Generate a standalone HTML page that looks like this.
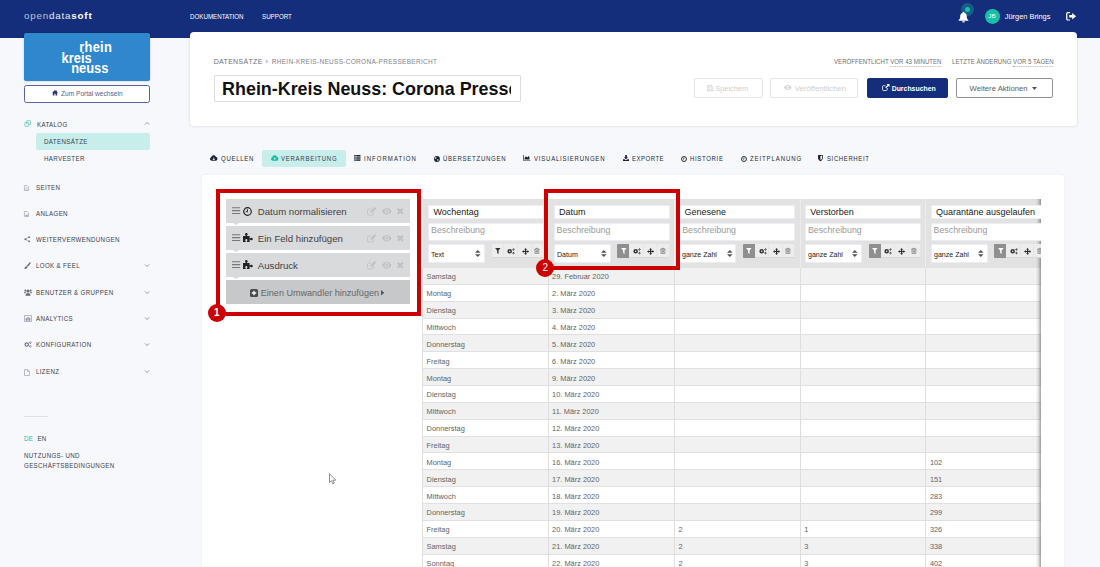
<!DOCTYPE html>
<html lang="de">
<head>
<meta charset="utf-8">
<title>Rhein-Kreis Neuss: Corona Pressebericht</title>
<style>
*{box-sizing:border-box;margin:0;padding:0}
html,body{width:1100px;height:567px;overflow:hidden;background:#f7f8fc;font-family:"Liberation Sans",sans-serif;color:#333}
body{position:relative}
.abs{position:absolute}
.t{position:absolute;white-space:nowrap;line-height:1}
svg{position:absolute;overflow:visible}
#hdr{position:absolute;left:0;top:0;width:1100px;height:38.3px;background:#142e7b}
#hdr .t{color:#fff}
.nav{font-size:6.6px;top:13.75px;transform:scaleX(.94);transform-origin:0 50%}
.sb{font-size:7px;letter-spacing:.4px;color:#3a3e4f;transform:scaleX(.88);transform-origin:0 50%}
#topcard{position:absolute;left:190px;top:32.2px;width:886.8px;height:93.7px;background:#fff;border-radius:4px;box-shadow:0 0 3px rgba(40,50,90,.18)}
#card{position:absolute;left:201.8px;top:175.2px;width:862.4px;height:400px;background:#fff;border-radius:3px;box-shadow:0 0 2px rgba(40,50,90,.10)}
.tab{font-size:7px;letter-spacing:.8px;color:#262b3a;top:154.8px;transform:scaleX(.86);transform-origin:0 50%}
.btn{position:absolute;top:78.1px;height:19.8px;border-radius:2px;font-size:7.6px;line-height:18.5px;white-space:nowrap;border:1px solid #ddd;background:#fff}
.meta{font-size:7px;color:#707070;top:58.1px;transform:scaleX(.873);transform-origin:0 50%}
.dot{border-bottom:1px dotted #aaa;padding-bottom:1px}
.prow{position:absolute;left:226px;width:184px;height:24px;background:#d9dadc}
.prow .t{font-size:9.65px;color:#414141;top:7.9px;left:31.8px}
.notch{position:absolute;left:6.8px;top:24px;width:0;height:0;border-left:3px solid transparent;border-right:3px solid transparent;border-top:2.5px solid #d9dadc}
.red{position:absolute;border:4.5px solid #cc0000}
.badge{position:absolute;width:18.2px;height:18.2px;border-radius:50%;background:#cc0000;color:#fff;font-size:10px;text-align:center;line-height:18.2px}
#thead{position:absolute;left:422.9px;top:199.2px;width:617.7px;height:68.9px;background:#e2e2e2;overflow:hidden}
#tbody{position:absolute;left:422.9px;top:268.1px;width:617.7px;height:300px;overflow:hidden}
.inp{position:absolute;background:#fff;border:1px solid #eceef3;border-radius:1px}
.inp .t{left:4px}
.row{position:absolute;left:0;width:618px;height:16.85px;border-bottom:1px solid #e0e0e0}
.row.g{background:#f1f1f1}
.row .t{font-size:7.4px;color:#646464;top:5.4px}
.vl{position:absolute;top:0;width:1px;height:300px;background:#dedede}
.ib{position:absolute;top:0;height:14.1px;background:#ededed;border-bottom:1px solid #d9d9d9;border-right:1px solid #e5e5e5}
.ib.on{background:#8f8f8f;border-color:#8f8f8f;border-radius:1px 0 0 1px}
</style>
</head>
<body>
<div id="hdr">
<div class="t" style="left:24px;top:10.8px;font-size:9.8px;letter-spacing:.8px"><span style="color:#bcc3da">open</span><span style="color:#e9ecf5">data</span><span style="font-weight:700">soft</span></div>
<div class="t nav" style="left:190px">DOKUMENTATION</div>
<div class="t nav" style="left:261.5px">SUPPORT</div>
<div class="abs" style="left:960.7px;top:2.8px;width:13.4px;height:13.4px;border-radius:50%;background:rgba(26,188,166,.34)"></div>
<div class="abs" style="left:964.6px;top:6.700px;width:5.600px;height:5.600px;border-radius:50%;background:#19c4a8"></div>
<svg style="left:958px;top:10.5px" width="11" height="12" viewBox="0 0 22 24"><path fill="#fff" d="M11 1.5c-.9 0-1.6.7-1.6 1.6v.6C6.3 4.5 4.4 7.200 4.400 10.400c0 4.200-1.300 6.400-3.200 7.900-.4.300-.2 1 .4 1h18.800c.6 0 .8-.7.4-1-1.900-1.500-3.200-3.700-3.200-7.900 0-3.200-1.900-5.900-5-6.700v-.6c0-.9-.7-1.600-1.600-1.600zM8.300 20.400c0 1.500 1.200 2.700 2.700 2.700s2.700-1.200 2.700-2.700z"/></svg>
<div class="abs" style="left:985px;top:9px;width:14.8px;height:14.8px;border-radius:50%;background:#17c0a6"></div>
<div class="t" style="left:988.3px;top:13.300px;font-size:6.200px;color:#f2fffc">JB</div>
<div class="t" style="left:1004.8px;top:12.8px;font-size:7.4px">Jürgen Brings</div>
<svg style="left:1066px;top:12.100px" width="10.400" height="8.600" viewBox="0 0 21 20" preserveAspectRatio="none"><path fill="none" stroke="#fff" stroke-width="2.6" d="M8 1.500H3.800C2.500 1.500 1.500 2.500 1.500 3.800v12.400c0 1.300 1 2.300 2.300 2.300H8"/><path fill="#fff" d="M12.500 2.500l8 7.500-8 7.500v-4.500H6.500V7h6z"/></svg>
</div>
<div id="side">
<div class="abs" style="left:24px;top:32.5px;width:126px;height:48.3px;background:#2f87cd;border-radius:2px;box-shadow:0 0 2px rgba(0,0,0,.25)"></div>
<div class="t" style="left:79.3px;top:41.8px;font-size:12.9px;font-weight:700;color:#fff;letter-spacing:0;transform:scaleY(1.13);transform-origin:0 84.65%;letter-spacing:.25px">rhein</div>
<div class="t" style="left:61.6px;top:52.6px;font-size:12.9px;font-weight:700;color:#fff;letter-spacing:0;transform:scaleY(1.13);transform-origin:0 84.65%">kreis</div>
<div class="t" style="left:71.2px;top:62.9px;font-size:12.9px;font-weight:700;color:#fff;letter-spacing:0;transform:scaleY(1.13);transform-origin:0 84.65%">neuss</div>
<div class="abs" style="left:24px;top:85px;width:126px;height:18px;background:#fff;border:1px solid #56629f;border-radius:2.500px"></div>
<svg style="left:52px;top:90.4px" width="6" height="5.500" viewBox="0 0 12 11"><path fill="#2c3680" d="M6 0L0 5.500h1.600V11h3.200V7.500h2.400V11h3.200V5.500H12L10 3.700V.8H8.500v1.500z"/></svg>
<div class="t" style="left:61px;top:91px;font-size:6.600px;color:#585e86">Zum Portal wechseln</div>
<svg style="left:24px;top:120.2px" width="7.400" height="7" viewBox="0 0 16 16"><g fill="none" stroke="#48c4ab" stroke-width="1.500"><rect x="5.500" y="1.500" width="9" height="9" rx="1.500"/><rect x="1.500" y="5.500" width="9" height="9" rx="1.500" fill="#f7f8fc"/><path d="M4 8.500h4"/></g></svg>
<div class="t sb" style="left:36.6px;top:120.6px">KATALOG</div>
<svg style="left:144.5px;top:122.3px" width="4.200" height="3" viewBox="0 0 5 3.500"><path d="M0 3L2.500 .5 5 3" fill="none" stroke="#7f8496" stroke-width="1"/></svg>
<div class="abs" style="left:36.400px;top:132.600px;width:113.200px;height:17.100px;background:#c7eeea;border-radius:2.500px"></div>
<div class="t sb" style="left:44.400px;top:137.600px">DATENSÄTZE</div>
<div class="t sb" style="left:44.400px;top:154.800px">HARVESTER</div>
<svg style="left:24px;top:184.8px" width="5" height="6" viewBox="0 0 12 14"><path fill="none" stroke="#a3a7b5" stroke-width="1.800" d="M1 1h6.500L11 4.500V13H1z"/><path stroke="#a3a7b5" stroke-width="1.400" d="M3.200 7h5.600M3.200 9.800h5.600"/></svg>
<div class="t sb" style="left:36.200px;top:184.0px">SEITEN</div>
<svg style="left:24px;top:210.8px" width="5" height="6" viewBox="0 0 12 14"><path fill="none" stroke="#a3a7b5" stroke-width="1.800" d="M1 1h6.500L11 4.500V13H1z"/><path fill="#a3a7b5" d="M2.500 11.500l2.300-4 1.700 2L8 8l1.800 3.500z"/></svg>
<div class="t sb" style="left:36.200px;top:210.0px">ANLAGEN</div>
<svg style="left:24px;top:235.9px" width="6.500" height="6.500" viewBox="0 0 13 13"><g fill="#6b6f7e"><circle cx="10.300" cy="2.300" r="1.900"/><circle cx="2.700" cy="6.500" r="1.900"/><circle cx="10.300" cy="10.700" r="1.900"/></g><path fill="none" stroke="#6b6f7e" stroke-width="1" d="M10.300 2.300L2.700 6.500l7.600 4.200"/></svg>
<div class="t sb" style="left:36.200px;top:236.0px">WEITERVERWENDUNGEN</div>
<svg style="left:24px;top:261.9px" width="7" height="7" viewBox="0 0 14 14"><path fill="#5d6070" d="M13 .6c.6.5.5 1.300.1 1.900L7.800 9.300 5.600 7.500 11.300.9c.5-.6 1.200-.7 1.700-.3zM4.700 8.300l2.100 1.800c.2 1.600-1 3.300-3.600 3.300-1.300 0-2.400-.5-3-1.100 1.500-.3 1.700-1.300 2-2.200.3-1 1.100-1.800 2.500-1.800z"/></svg>
<div class="t sb" style="left:36.200px;top:262.0px">LOOK &amp; FEEL</div>
<svg style="left:144.5px;top:264.2px" width="4.200" height="3" viewBox="0 0 5 3.500"><path d="M0 .5L2.500 3 5 .5" fill="none" stroke="#7f8496" stroke-width="1"/></svg>
<svg style="left:24px;top:288.7px" width="8" height="7" viewBox="0 0 16 14"><g fill="#666a78"><circle cx="8" cy="3.800" r="3"/><path d="M3 13.500c0-3.500 2-5.500 5-5.500s5 2 5 5.500z"/><circle cx="2.800" cy="3" r="2"/><circle cx="13.200" cy="3" r="2"/><path d="M0 8.500c0-2 1.200-3 2.800-3 .8 0 1.400.2 1.900.7C3.600 7 3 7.800 2.700 8.500zM16 8.500c0-2-1.200-3-2.800-3-.8 0-1.400.2-1.900.7 1.100.8 1.700 1.600 2 2.300z"/></g></svg>
<div class="t sb" style="left:36.200px;top:288.8px">BENUTZER &amp; GRUPPEN</div>
<svg style="left:144.5px;top:291.0px" width="4.200" height="3" viewBox="0 0 5 3.500"><path d="M0 .5L2.500 3 5 .5" fill="none" stroke="#7f8496" stroke-width="1"/></svg>
<svg style="left:24px;top:314.9px" width="8" height="7" viewBox="0 0 16 14"><path fill="none" stroke="#a3a7b5" stroke-width="1.600" d="M1 1v12h14V1z"/><path fill="#7d8190" d="M3.500 6.500h2.200v5h-2.200zM6.900 4h2.200v7.500H6.900zM10.300 5.500h2.200v6h-2.200z"/></svg>
<div class="t sb" style="left:36.200px;top:315.0px">ANALYTICS</div>
<svg style="left:144.5px;top:317.2px" width="4.200" height="3" viewBox="0 0 5 3.500"><path d="M0 .5L2.500 3 5 .5" fill="none" stroke="#7f8496" stroke-width="1"/></svg>
<svg style="left:24px;top:341.1px" width="8" height="7" viewBox="0 0 16 14"><g fill="none" stroke="#747887"><circle cx="5.500" cy="7" r="3.400" stroke-width="2.400"/><circle cx="12.700" cy="3.300" r="1.700" stroke-width="1.500"/><circle cx="12.700" cy="10.700" r="1.700" stroke-width="1.500"/></g></svg>
<div class="t sb" style="left:36.200px;top:341.2px">KONFIGURATION</div>
<svg style="left:144.5px;top:343.40000000000003px" width="4.200" height="3" viewBox="0 0 5 3.500"><path d="M0 .5L2.500 3 5 .5" fill="none" stroke="#7f8496" stroke-width="1"/></svg>
<svg style="left:24px;top:368.79999999999995px" width="6" height="7" viewBox="0 0 12 14"><path fill="none" stroke="#a3a7b5" stroke-width="1.500" d="M1 1h6.500L11 4.500V13H1zM7 1v4h4"/></svg>
<div class="t sb" style="left:36.200px;top:368.0px">LIZENZ</div>
<svg style="left:144.5px;top:370.2px" width="4.200" height="3" viewBox="0 0 5 3.500"><path d="M0 .5L2.500 3 5 .5" fill="none" stroke="#7f8496" stroke-width="1"/></svg>
<div class="abs" style="left:24px;top:415.500px;width:24px;height:1px;background:#dfe1ea"></div>
<div class="t sb" style="left:24px;top:434.800px"><span style="color:#22b79b">DE</span>&nbsp; EN</div>
<div class="t sb" style="left:24px;top:452.300px">NUTZUNGS- UND</div>
<div class="t sb" style="left:24px;top:462.300px">GESCHÄFTSBEDINGUNGEN</div>
</div>
<div id="topcard"></div>
<div class="t" style="left:213.700px;top:58.200px;font-size:7px;letter-spacing:.32px;color:#6b6f7d">DATENSÄTZE<span style="letter-spacing:0;font-size:8px;line-height:0;color:#777b88;margin:0 1.600px 0 .4px">&nbsp;›&nbsp;</span><span style="font-size:6.500px;letter-spacing:.3px;color:#80848f">RHEIN-KREIS-NEUSS-CORONA-PRESSEBERICHT</span></div>
<div class="abs" style="left:213.700px;top:75px;width:307.300px;height:26.800px;background:#fff;border:1px solid #dcdcdc;border-radius:1px;overflow:hidden"><div class="abs" style="left:7.400px;top:0;width:289.100px;height:25px;overflow:hidden"><div class="t" style="left:0;top:5.300px;font-size:17.900px;font-weight:700;color:#111;letter-spacing:0">Rhein-Kreis Neuss: Corona Pressebericht</div></div></div>
<div class="t meta" style="left:833.500px">VERÖFFENTLICHT <span class="dot">VOR 43 MINUTEN</span></div>
<div class="t meta" style="left:951.600px">LETZTE ÄNDERUNG <span class="dot">VOR 5 TAGEN</span></div>
<div class="btn" style="left:694.100px;width:68.500px;color:#cfcfcf;border-color:#e4e4e4"><svg style="left:11.500px;top:5.600px" width="6.500" height="6.500" viewBox="0 0 13 13"><path fill="none" stroke="#cfcfcf" stroke-width="1.400" d="M1 1h8.500L12 3.500V12H1zM3.500 1v3.500h5V1M3.500 12V8h6v4"/></svg><span class="t" style="left:20.300px;top:5.600px;font-size:7.350px">Speichern</span></div>
<div class="btn" style="left:770.200px;width:88.300px;color:#cfcfcf;border-color:#e4e4e4"><svg style="left:13px;top:6.300px" width="7.500" height="5" viewBox="0 0 15 10"><path fill="#cfcfcf" d="M7.500 0C4 0 1.300 2.200 0 5c1.300 2.800 4 5 7.500 5S13.700 7.800 15 5C13.700 2.200 11 0 7.500 0zm0 8.300A3.300 3.300 0 1 1 7.500 1.700a3.300 3.300 0 0 1 0 6.600z"/><circle cx="7.500" cy="5" r="1.700" fill="#cfcfcf"/></svg><span class="t" style="left:23.600px;top:5.500px;font-size:7.750px">Veröffentlichen</span></div>
<div class="btn" style="left:867px;width:81.400px;background:#142e7b;border-color:#142e7b;color:#fff"><svg style="left:13.500px;top:5.400px" width="7.500" height="7" viewBox="0 0 15 14"><path fill="none" stroke="#fff" stroke-width="1.600" d="M10.500 8v3.500c0 .8-.7 1.500-1.500 1.500H2.500C1.700 13 1 12.300 1 11.500V5c0-.8.7-1.500 1.500-1.500H7"/><path fill="#fff" d="M9 0h6v6l-2.200-2.200-4.600 4.600-1.600-1.600 4.600-4.600z"/></svg><span class="t" style="left:23.700px;top:6.500px;font-weight:700;font-size:6.900px">Durchsuchen</span></div>
<div class="btn" style="left:956.400px;width:96.400px;color:#5c5c5c;border-color:#919191"><span class="t" style="left:12.200px;top:5.500px;font-size:7.700px">Weitere Aktionen</span><svg style="left:75px;top:8.400px" width="5" height="3" viewBox="0 0 10 6"><path fill="#555" d="M0 0h10L5 6z"/></svg></div>
<div class="abs" style="left:262.100px;top:149.700px;width:83.900px;height:17.100px;background:#c7eeea;border-radius:2.500px"></div>
<svg style="left:209.5px;top:155.3px" width="7.500" height="6" viewBox="0 0 16 13"><path fill="#1d2233" d="M4 12.500C1.800 12.500 0 10.800 0 8.700 0 7 1.100 5.600 2.700 5.100 2.900 2.500 5.100.5 7.800.5c2.200 0 4.100 1.400 4.800 3.400C14.600 4.200 16 5.900 16 8c0 2.500-2 4.500-4.400 4.500z"/><path fill="none" stroke="#f7f8fc" stroke-width="1.700" d="M8 5.500v5M5.800 8.500L8 11l2.200-2.500"/></svg>
<div class="t tab" style="left:220.7px;letter-spacing:0.83px">QUELLEN</div>
<svg style="left:270.5px;top:155.3px" width="7.500" height="6" viewBox="0 0 16 13"><path fill="#1cb8a0" d="M4 12.500C1.800 12.500 0 10.800 0 8.700 0 7 1.100 5.600 2.700 5.100 2.900 2.500 5.100.5 7.800.5c2.200 0 4.100 1.400 4.800 3.400C14.600 4.200 16 5.900 16 8c0 2.500-2 4.500-4.400 4.500z"/><path fill="none" stroke="#c7eeea" stroke-width="1.700" d="M8 11V6M5.800 8.300L8 5.800l2.200 2.500"/></svg>
<div class="t tab" style="left:281.2px;letter-spacing:0.86px;color:#33404d">VERARBEITUNG</div>
<svg style="left:354.3px;top:155.3px" width="6.600" height="5.800" viewBox="0 0 14 13"><path fill="#1d2233" d="M0 0h14v13H0z"/><path stroke="#f7f8fc" stroke-width="1.100" d="M0 3.500h14M0 6.500h14M0 9.500h14M4 0v13"/></svg>
<div class="t tab" style="left:364.2px;letter-spacing:1.19px">INFORMATION</div>
<svg style="left:434.2px;top:155.60000000000002px" width="5.900" height="5.900" viewBox="0 0 14 14"><circle cx="7" cy="7" r="7" fill="#1d2233"/><path fill="#f7f8fc" d="M3 3.500c1-.5 2.500-.3 3 .5s-.5 1.500-1.500 2S3 7.500 2 6.500 2.300 4 3 3.500zM8 8c1-.5 3 0 3 1s-1 2.500-2 2.500S7.500 10 7.500 9.300 7.500 8.300 8 8z"/></svg>
<div class="t tab" style="left:443.2px;letter-spacing:0.84px">ÜBERSETZUNGEN</div>
<svg style="left:523px;top:155.3px" width="7.600" height="5.800" viewBox="0 0 16 13"><path fill="#1d2233" d="M0 0h1.500v11.500H16V13H0zM3 10V6.500l3-3.500 3 2.500 3.500-3.500L14 5v5z"/></svg>
<div class="t tab" style="left:534.4px;letter-spacing:0.9px">VISUALISIERUNGEN</div>
<svg style="left:622.5px;top:155.4px" width="6" height="6" viewBox="0 0 14 14"><path fill="#1d2233" d="M5 0h4v5h3L7 10 2 5h3zM0 10h3.500L7 12.500 10.500 10H14v4H0z"/></svg>
<div class="t tab" style="left:632.3px;letter-spacing:0.57px">EXPORTE</div>
<svg style="left:681px;top:155.5px" width="6" height="6" viewBox="0 0 14 14"><circle cx="7" cy="7" r="5.800" fill="none" stroke="#1d2233" stroke-width="2.200"/><path fill="none" stroke="#1d2233" stroke-width="1.600" d="M7 3.500V7.300H4.500"/></svg>
<div class="t tab" style="left:690.2px;letter-spacing:0.77px">HISTORIE</div>
<svg style="left:740.5px;top:155.5px" width="6" height="6" viewBox="0 0 14 14"><circle cx="7" cy="7" r="5.800" fill="none" stroke="#1d2233" stroke-width="2.200"/><path fill="none" stroke="#1d2233" stroke-width="1.600" d="M7 3.500V7.300H4.500"/></svg>
<div class="t tab" style="left:749.8px;letter-spacing:1.04px">ZEITPLANUNG</div>
<svg style="left:818.4px;top:155.3px" width="4.900" height="6.200" viewBox="0 0 11 14"><path fill="#1d2233" d="M0 0h11v7c0 3.500-3 6-5.500 7C3 13 0 10.500 0 7z"/><path fill="#f7f8fc" d="M5.500 1.800H9.300V7c0 2.200-1.800 4-3.800 4.900z"/></svg>
<div class="t tab" style="left:827px;letter-spacing:0.7px">SICHERHEIT</div>
<div id="card"></div>
<div class="prow" style="top:199px">
<svg style="left:6px;top:8px" width="8.200" height="7.200" viewBox="0 0 8.200 7.200"><path stroke="#777" stroke-width="1.100" d="M0 .7h8.200M0 3.600h8.200M0 6.500h8.200"/></svg>
<svg style="left:17.200px;top:7.800px" width="9" height="9" viewBox="0 0 18 18"><circle cx="9" cy="9" r="7.600" fill="none" stroke="#222" stroke-width="2.400"/><path fill="none" stroke="#222" stroke-width="2" d="M9 4.500V9.500H5.500"/></svg>
<div class="t">Datum normalisieren</div>
<svg style="left:141px;top:7.500px" width="9.500" height="8.500" viewBox="0 0 19 17"><path fill="none" stroke="#c0c1c3" stroke-width="1.600" d="M13 10v4c0 1.100-.9 2-2 2H3c-1.100 0-2-.9-2-2V6c0-1.100.9-2 2-2h6"/><path fill="#c0c1c3" d="M15.500 0l3 3-8 8-3.700.7.700-3.700z"/></svg>
<svg style="left:156px;top:8.800px" width="9.500" height="6.500" viewBox="0 0 15 10"><path fill="#c0c1c3" d="M7.500 0C4 0 1.300 2.200 0 5c1.300 2.800 4 5 7.500 5S13.700 7.800 15 5C13.700 2.200 11 0 7.500 0zm0 8.500A3.500 3.500 0 1 1 7.500 1.500a3.500 3.500 0 0 1 0 7z"/><circle cx="7.500" cy="5" r="1.800" fill="#c0c1c3"/></svg>
<svg style="left:171px;top:8.800px" width="6.400" height="6.400" viewBox="0 0 10 10"><path stroke="#c0c1c3" stroke-width="3.300" d="M1 1l8 8M9 1l-8 8"/></svg>
<div class="notch"></div></div>
<div class="prow" style="top:226.2px">
<svg style="left:6px;top:8px" width="8.200" height="7.200" viewBox="0 0 8.200 7.200"><path stroke="#777" stroke-width="1.100" d="M0 .7h8.200M0 3.600h8.200M0 6.500h8.200"/></svg>
<svg style="left:17px;top:6.900px" width="9.800" height="9" viewBox="0 0 19.600 18"><g fill="#222"><rect x="0" y="6" width="13.200" height="12"/><circle cx="6.600" cy="2.500" r="2.500"/><rect x="5.300" y="3" width="2.600" height="4"/><circle cx="17" cy="12" r="2.500"/><rect x="12.500" y="10.700" width="4" height="2.600"/></g><g fill="#d9dadc"><circle cx="6.600" cy="14.300" r="2.200"/><rect x="5.500" y="15" width="2.200" height="3.200"/></g></svg>
<div class="t">Ein Feld hinzufügen</div>
<svg style="left:141px;top:7.500px" width="9.500" height="8.500" viewBox="0 0 19 17"><path fill="none" stroke="#c0c1c3" stroke-width="1.600" d="M13 10v4c0 1.100-.9 2-2 2H3c-1.100 0-2-.9-2-2V6c0-1.100.9-2 2-2h6"/><path fill="#c0c1c3" d="M15.500 0l3 3-8 8-3.700.7.700-3.700z"/></svg>
<svg style="left:156px;top:8.800px" width="9.500" height="6.500" viewBox="0 0 15 10"><path fill="#c0c1c3" d="M7.500 0C4 0 1.300 2.200 0 5c1.300 2.800 4 5 7.500 5S13.700 7.800 15 5C13.700 2.200 11 0 7.500 0zm0 8.500A3.500 3.500 0 1 1 7.500 1.500a3.500 3.500 0 0 1 0 7z"/><circle cx="7.500" cy="5" r="1.800" fill="#c0c1c3"/></svg>
<svg style="left:171px;top:8.800px" width="6.400" height="6.400" viewBox="0 0 10 10"><path stroke="#c0c1c3" stroke-width="3.300" d="M1 1l8 8M9 1l-8 8"/></svg>
<div class="notch"></div></div>
<div class="prow" style="top:253px">
<svg style="left:6px;top:8px" width="8.200" height="7.200" viewBox="0 0 8.200 7.200"><path stroke="#777" stroke-width="1.100" d="M0 .7h8.200M0 3.600h8.200M0 6.500h8.200"/></svg>
<svg style="left:17px;top:6.900px" width="9.800" height="9" viewBox="0 0 19.600 18"><g fill="#222"><rect x="0" y="6" width="13.200" height="12"/><circle cx="6.600" cy="2.500" r="2.500"/><rect x="5.300" y="3" width="2.600" height="4"/><circle cx="17" cy="12" r="2.500"/><rect x="12.500" y="10.700" width="4" height="2.600"/></g><g fill="#d9dadc"><circle cx="6.600" cy="14.300" r="2.200"/><rect x="5.500" y="15" width="2.200" height="3.200"/></g></svg>
<div class="t">Ausdruck</div>
<svg style="left:141px;top:7.500px" width="9.500" height="8.500" viewBox="0 0 19 17"><path fill="none" stroke="#c0c1c3" stroke-width="1.600" d="M13 10v4c0 1.100-.9 2-2 2H3c-1.100 0-2-.9-2-2V6c0-1.100.9-2 2-2h6"/><path fill="#c0c1c3" d="M15.500 0l3 3-8 8-3.700.7.700-3.700z"/></svg>
<svg style="left:156px;top:8.800px" width="9.500" height="6.500" viewBox="0 0 15 10"><path fill="#c0c1c3" d="M7.500 0C4 0 1.300 2.200 0 5c1.300 2.800 4 5 7.500 5S13.700 7.800 15 5C13.700 2.200 11 0 7.500 0zm0 8.500A3.500 3.500 0 1 1 7.500 1.500a3.500 3.500 0 0 1 0 7z"/><circle cx="7.500" cy="5" r="1.800" fill="#c0c1c3"/></svg>
<svg style="left:171px;top:8.800px" width="6.400" height="6.400" viewBox="0 0 10 10"><path stroke="#c0c1c3" stroke-width="3.300" d="M1 1l8 8M9 1l-8 8"/></svg>
<div class="notch"></div></div>
<div class="abs" style="left:226px;top:280px;width:184px;height:23.700px;background:#c7c8ca"></div>
<svg style="left:250px;top:288.500px" width="8" height="8" viewBox="0 0 16 16"><rect width="16" height="16" rx="3" fill="#4a4a4a"/><path stroke="#fff" stroke-width="2.600" d="M8 3.500v9M3.500 8h9"/></svg>
<div class="t" style="left:260.800px;top:288.500px;font-size:9.060px;color:#666">Einen Umwandler hinzufügen</div>
<svg style="left:381px;top:289.600px" width="3.300" height="5.600" viewBox="0 0 3 5"><path fill="#555" d="M0 0l3 2.500L0 5z"/></svg>
<div id="thead">
<div class="abs" style="right:0;top:0;width:5px;height:400px;background:linear-gradient(90deg,rgba(0,0,0,0),rgba(0,0,0,.10) 45%,rgba(0,0,0,.36))"></div>
<div class="inp" style="left:5.40px;top:5.600px;width:115.800px;height:13.900px"><div class="t" style="left:4.200px;top:2.100px;font-size:9px;color:#222">Wochentag</div></div>
<div class="inp" style="left:5.40px;top:23.900px;width:115.800px;height:17.700px"><div class="t" style="left:1.800px;top:2.400px;font-size:8.800px;color:#9a9a9a">Beschreibung</div></div>
<div class="inp" style="left:5.40px;top:45.200px;width:56.900px;height:18.200px"><div class="t" style="left:1.800px;top:5.200px;font-size:7.500px;color:#222;transform:scaleX(.94);transform-origin:0 50%">Text</div><svg style="left:46.200px;top:4.800px" width="5.600" height="7" viewBox="0 0 8 10"><path fill="#555" d="M4 0l4 4H0zM4 10L0 6h8z"/></svg></div>
<div class="abs" style="left:69.10px;top:44.900px;width:52.100px;height:14.100px">
<div class="ib" style="left:0.00px;width:11.90px"></div>
<div class="ib" style="left:11.90px;width:14.50px"></div>
<div class="ib" style="left:26.40px;width:13.60px"></div>
<div class="ib" style="left:40.00px;width:12.10px"></div>
<svg style="left:3.100px;top:4.100px" width="5.700" height="6" viewBox="0 0 10 11"><path fill="#333" d="M0 0h10L6.300 4.800V11L3.700 9V4.800z"/></svg>
<svg style="left:15.500px;top:3.700px" width="8.200" height="6.600" viewBox="0 0 17 14"><g fill="none" stroke="#333"><circle cx="5.500" cy="7" r="3.300" stroke-width="3.200"/><circle cx="13.600" cy="3.200" r="1.500" stroke-width="1.900"/><circle cx="13.600" cy="10.800" r="1.500" stroke-width="1.900"/></g></svg>
<svg style="left:29.700px;top:3.500px" width="7.200" height="7" viewBox="0 0 14 14"><path fill="#2b2b2b" d="M7 0l2.800 3.300H8.200v2.500h2.500V4.200L14 7l-3.300 2.800V8.200H8.200v2.500h1.600L7 14l-2.800-3.300h1.600V8.200H3.300v1.600L0 7l3.300-2.800v1.600h2.500V3.300H4.200z"/></svg>
<svg style="left:42.300px;top:4.200px" width="5.800" height="5.800" viewBox="0 0 11 12"><path fill="none" stroke="#6e6e6e" stroke-width="1.300" d="M0 2.500h11M3.500 2.500V.7h4v1.800M1.500 2.500v8.800h8V2.500M4 4.800v4.500M5.500 4.800v4.500M7 4.800v4.500"/></svg>
</div>
<div class="abs" style="left:125.50px;top:0;width:1px;height:70px;background:#ececec"></div>
<div class="inp" style="left:130.90px;top:5.600px;width:115.800px;height:13.900px"><div class="t" style="left:4.200px;top:2.100px;font-size:9px;color:#222">Datum</div></div>
<div class="inp" style="left:130.90px;top:23.900px;width:115.800px;height:17.700px"><div class="t" style="left:1.800px;top:2.400px;font-size:8.800px;color:#9a9a9a">Beschreibung</div></div>
<div class="inp" style="left:130.90px;top:45.200px;width:56.900px;height:18.200px"><div class="t" style="left:1.800px;top:5.200px;font-size:7.500px;color:#222;transform:scaleX(.94);transform-origin:0 50%">Datum</div><svg style="left:46.200px;top:4.800px" width="5.600" height="7" viewBox="0 0 8 10"><path fill="#555" d="M4 0l4 4H0zM4 10L0 6h8z"/></svg></div>
<div class="abs" style="left:194.60px;top:44.900px;width:52.100px;height:14.100px">
<div class="ib on" style="left:0.00px;width:11.90px"></div>
<div class="ib" style="left:11.90px;width:14.50px"></div>
<div class="ib" style="left:26.40px;width:13.60px"></div>
<div class="ib" style="left:40.00px;width:12.10px"></div>
<svg style="left:3.100px;top:4.100px" width="5.700" height="6" viewBox="0 0 10 11"><path fill="#fff" d="M0 0h10L6.300 4.800V11L3.700 9V4.800z"/></svg>
<svg style="left:15.500px;top:3.700px" width="8.200" height="6.600" viewBox="0 0 17 14"><g fill="none" stroke="#333"><circle cx="5.500" cy="7" r="3.300" stroke-width="3.200"/><circle cx="13.600" cy="3.200" r="1.500" stroke-width="1.900"/><circle cx="13.600" cy="10.800" r="1.500" stroke-width="1.900"/></g></svg>
<svg style="left:29.700px;top:3.500px" width="7.200" height="7" viewBox="0 0 14 14"><path fill="#2b2b2b" d="M7 0l2.800 3.300H8.200v2.500h2.500V4.200L14 7l-3.300 2.800V8.200H8.200v2.500h1.600L7 14l-2.800-3.300h1.600V8.200H3.300v1.600L0 7l3.300-2.800v1.600h2.500V3.300H4.200z"/></svg>
<svg style="left:42.300px;top:4.200px" width="5.800" height="5.800" viewBox="0 0 11 12"><path fill="none" stroke="#6e6e6e" stroke-width="1.300" d="M0 2.500h11M3.500 2.500V.7h4v1.800M1.500 2.500v8.800h8V2.500M4 4.800v4.500M5.500 4.800v4.500M7 4.800v4.500"/></svg>
</div>
<div class="abs" style="left:251.10px;top:0;width:1px;height:70px;background:#ececec"></div>
<div class="inp" style="left:256.50px;top:5.600px;width:115.800px;height:13.900px"><div class="t" style="left:4.200px;top:2.100px;font-size:9px;color:#222">Genesene</div></div>
<div class="inp" style="left:256.50px;top:23.900px;width:115.800px;height:17.700px"><div class="t" style="left:1.800px;top:2.400px;font-size:8.800px;color:#9a9a9a">Beschreibung</div></div>
<div class="inp" style="left:256.50px;top:45.200px;width:56.900px;height:18.200px"><div class="t" style="left:1.800px;top:5.200px;font-size:7.500px;color:#222;transform:scaleX(.94);transform-origin:0 50%">ganze Zahl</div><svg style="left:46.200px;top:4.800px" width="5.600" height="7" viewBox="0 0 8 10"><path fill="#555" d="M4 0l4 4H0zM4 10L0 6h8z"/></svg></div>
<div class="abs" style="left:320.20px;top:44.900px;width:52.100px;height:14.100px">
<div class="ib on" style="left:0.00px;width:11.90px"></div>
<div class="ib" style="left:11.90px;width:14.50px"></div>
<div class="ib" style="left:26.40px;width:13.60px"></div>
<div class="ib" style="left:40.00px;width:12.10px"></div>
<svg style="left:3.100px;top:4.100px" width="5.700" height="6" viewBox="0 0 10 11"><path fill="#fff" d="M0 0h10L6.300 4.800V11L3.700 9V4.800z"/></svg>
<svg style="left:15.500px;top:3.700px" width="8.200" height="6.600" viewBox="0 0 17 14"><g fill="none" stroke="#333"><circle cx="5.500" cy="7" r="3.300" stroke-width="3.200"/><circle cx="13.600" cy="3.200" r="1.500" stroke-width="1.900"/><circle cx="13.600" cy="10.800" r="1.500" stroke-width="1.900"/></g></svg>
<svg style="left:29.700px;top:3.500px" width="7.200" height="7" viewBox="0 0 14 14"><path fill="#2b2b2b" d="M7 0l2.800 3.300H8.200v2.500h2.500V4.200L14 7l-3.300 2.800V8.200H8.200v2.500h1.600L7 14l-2.800-3.300h1.600V8.200H3.300v1.600L0 7l3.300-2.800v1.600h2.500V3.300H4.200z"/></svg>
<svg style="left:42.300px;top:4.200px" width="5.800" height="5.800" viewBox="0 0 11 12"><path fill="none" stroke="#6e6e6e" stroke-width="1.300" d="M0 2.500h11M3.500 2.500V.7h4v1.800M1.500 2.500v8.800h8V2.500M4 4.800v4.500M5.500 4.800v4.500M7 4.800v4.500"/></svg>
</div>
<div class="abs" style="left:376.80px;top:0;width:1px;height:70px;background:#ececec"></div>
<div class="inp" style="left:382.20px;top:5.600px;width:115.800px;height:13.900px"><div class="t" style="left:4.200px;top:2.100px;font-size:9px;color:#222">Verstorben</div></div>
<div class="inp" style="left:382.20px;top:23.900px;width:115.800px;height:17.700px"><div class="t" style="left:1.800px;top:2.400px;font-size:8.800px;color:#9a9a9a">Beschreibung</div></div>
<div class="inp" style="left:382.20px;top:45.200px;width:56.900px;height:18.200px"><div class="t" style="left:1.800px;top:5.200px;font-size:7.500px;color:#222;transform:scaleX(.94);transform-origin:0 50%">ganze Zahl</div><svg style="left:46.200px;top:4.800px" width="5.600" height="7" viewBox="0 0 8 10"><path fill="#555" d="M4 0l4 4H0zM4 10L0 6h8z"/></svg></div>
<div class="abs" style="left:445.90px;top:44.900px;width:52.100px;height:14.100px">
<div class="ib on" style="left:0.00px;width:11.90px"></div>
<div class="ib" style="left:11.90px;width:14.50px"></div>
<div class="ib" style="left:26.40px;width:13.60px"></div>
<div class="ib" style="left:40.00px;width:12.10px"></div>
<svg style="left:3.100px;top:4.100px" width="5.700" height="6" viewBox="0 0 10 11"><path fill="#fff" d="M0 0h10L6.300 4.800V11L3.700 9V4.800z"/></svg>
<svg style="left:15.500px;top:3.700px" width="8.200" height="6.600" viewBox="0 0 17 14"><g fill="none" stroke="#333"><circle cx="5.500" cy="7" r="3.300" stroke-width="3.200"/><circle cx="13.600" cy="3.200" r="1.500" stroke-width="1.900"/><circle cx="13.600" cy="10.800" r="1.500" stroke-width="1.900"/></g></svg>
<svg style="left:29.700px;top:3.500px" width="7.200" height="7" viewBox="0 0 14 14"><path fill="#2b2b2b" d="M7 0l2.800 3.300H8.200v2.500h2.500V4.200L14 7l-3.300 2.800V8.200H8.200v2.500h1.600L7 14l-2.800-3.300h1.600V8.200H3.300v1.600L0 7l3.300-2.800v1.600h2.500V3.300H4.200z"/></svg>
<svg style="left:42.300px;top:4.200px" width="5.800" height="5.800" viewBox="0 0 11 12"><path fill="none" stroke="#6e6e6e" stroke-width="1.300" d="M0 2.500h11M3.500 2.500V.7h4v1.800M1.500 2.500v8.800h8V2.500M4 4.800v4.500M5.500 4.800v4.500M7 4.800v4.500"/></svg>
</div>
<div class="abs" style="left:502.50px;top:0;width:1px;height:70px;background:#ececec"></div>
<div class="inp" style="left:507.90px;top:5.600px;width:115.800px;height:13.900px"><div class="t" style="left:4.200px;top:2.100px;font-size:9px;color:#222">Quarantäne ausgelaufen</div></div>
<div class="inp" style="left:507.90px;top:23.900px;width:115.800px;height:17.700px"><div class="t" style="left:1.800px;top:2.400px;font-size:8.800px;color:#9a9a9a">Beschreibung</div></div>
<div class="inp" style="left:507.90px;top:45.200px;width:56.900px;height:18.200px"><div class="t" style="left:1.800px;top:5.200px;font-size:7.500px;color:#222;transform:scaleX(.94);transform-origin:0 50%">ganze Zahl</div><svg style="left:46.200px;top:4.800px" width="5.600" height="7" viewBox="0 0 8 10"><path fill="#555" d="M4 0l4 4H0zM4 10L0 6h8z"/></svg></div>
<div class="abs" style="left:571.60px;top:44.900px;width:52.100px;height:14.100px">
<div class="ib on" style="left:0.00px;width:11.90px"></div>
<div class="ib" style="left:11.90px;width:14.50px"></div>
<div class="ib" style="left:26.40px;width:13.60px"></div>
<div class="ib" style="left:40.00px;width:12.10px"></div>
<svg style="left:3.100px;top:4.100px" width="5.700" height="6" viewBox="0 0 10 11"><path fill="#fff" d="M0 0h10L6.300 4.800V11L3.700 9V4.800z"/></svg>
<svg style="left:15.500px;top:3.700px" width="8.200" height="6.600" viewBox="0 0 17 14"><g fill="none" stroke="#333"><circle cx="5.500" cy="7" r="3.300" stroke-width="3.200"/><circle cx="13.600" cy="3.200" r="1.500" stroke-width="1.900"/><circle cx="13.600" cy="10.800" r="1.500" stroke-width="1.900"/></g></svg>
<svg style="left:29.700px;top:3.500px" width="7.200" height="7" viewBox="0 0 14 14"><path fill="#2b2b2b" d="M7 0l2.800 3.300H8.200v2.500h2.500V4.200L14 7l-3.300 2.800V8.200H8.200v2.500h1.600L7 14l-2.800-3.300h1.600V8.200H3.300v1.600L0 7l3.300-2.800v1.600h2.500V3.300H4.200z"/></svg>
<svg style="left:42.300px;top:4.200px" width="5.800" height="5.800" viewBox="0 0 11 12"><path fill="none" stroke="#6e6e6e" stroke-width="1.300" d="M0 2.500h11M3.500 2.500V.7h4v1.800M1.500 2.500v8.800h8V2.500M4 4.800v4.500M5.500 4.800v4.500M7 4.800v4.500"/></svg>
</div>
</div>
<div class="abs" style="left:422.400px;top:268px;width:1px;height:300px;background:#e0e0e0"></div>
<div id="tbody">
<div class="row g" style="top:0.00px">
<div class="t" style="left:3.70px">Samstag</div>
<div class="t" style="left:129.20px">29. Februar 2020</div>
</div>
<div class="row" style="top:16.85px">
<div class="t" style="left:3.70px">Montag</div>
<div class="t" style="left:129.20px">2. März 2020</div>
</div>
<div class="row g" style="top:33.70px">
<div class="t" style="left:3.70px">Dienstag</div>
<div class="t" style="left:129.20px">3. März 2020</div>
</div>
<div class="row" style="top:50.55px">
<div class="t" style="left:3.70px">Mittwoch</div>
<div class="t" style="left:129.20px">4. März 2020</div>
</div>
<div class="row g" style="top:67.40px">
<div class="t" style="left:3.70px">Donnerstag</div>
<div class="t" style="left:129.20px">5. März 2020</div>
</div>
<div class="row" style="top:84.25px">
<div class="t" style="left:3.70px">Freitag</div>
<div class="t" style="left:129.20px">6. März 2020</div>
</div>
<div class="row g" style="top:101.10px">
<div class="t" style="left:3.70px">Montag</div>
<div class="t" style="left:129.20px">9. März 2020</div>
</div>
<div class="row" style="top:117.95px">
<div class="t" style="left:3.70px">Dienstag</div>
<div class="t" style="left:129.20px">10. März 2020</div>
</div>
<div class="row g" style="top:134.80px">
<div class="t" style="left:3.70px">Mittwoch</div>
<div class="t" style="left:129.20px">11. März 2020</div>
</div>
<div class="row" style="top:151.65px">
<div class="t" style="left:3.70px">Donnerstag</div>
<div class="t" style="left:129.20px">12. März 2020</div>
</div>
<div class="row g" style="top:168.50px">
<div class="t" style="left:3.70px">Freitag</div>
<div class="t" style="left:129.20px">13. März 2020</div>
</div>
<div class="row" style="top:185.35px">
<div class="t" style="left:3.70px">Montag</div>
<div class="t" style="left:129.20px">16. März 2020</div>
<div class="t" style="left:507.00px">102</div>
</div>
<div class="row g" style="top:202.20px">
<div class="t" style="left:3.70px">Dienstag</div>
<div class="t" style="left:129.20px">17. März 2020</div>
<div class="t" style="left:507.00px">151</div>
</div>
<div class="row" style="top:219.05px">
<div class="t" style="left:3.70px">Mittwoch</div>
<div class="t" style="left:129.20px">18. März 2020</div>
<div class="t" style="left:507.00px">283</div>
</div>
<div class="row g" style="top:235.90px">
<div class="t" style="left:3.70px">Donnerstag</div>
<div class="t" style="left:129.20px">19. März 2020</div>
<div class="t" style="left:507.00px">299</div>
</div>
<div class="row" style="top:252.75px">
<div class="t" style="left:3.70px">Freitag</div>
<div class="t" style="left:129.20px">20. März 2020</div>
<div class="t" style="left:255.60px">2</div>
<div class="t" style="left:381.30px">1</div>
<div class="t" style="left:507.00px">326</div>
</div>
<div class="row g" style="top:269.60px">
<div class="t" style="left:3.70px">Samstag</div>
<div class="t" style="left:129.20px">21. März 2020</div>
<div class="t" style="left:255.60px">2</div>
<div class="t" style="left:381.30px">3</div>
<div class="t" style="left:507.00px">338</div>
</div>
<div class="row" style="top:286.45px">
<div class="t" style="left:3.70px">Sonntag</div>
<div class="t" style="left:129.20px">22. März 2020</div>
<div class="t" style="left:255.60px">2</div>
<div class="t" style="left:381.30px">3</div>
<div class="t" style="left:507.00px">402</div>
</div>
<div class="abs" style="right:0;top:0;width:5px;height:400px;background:linear-gradient(90deg,rgba(0,0,0,0),rgba(0,0,0,.10) 45%,rgba(0,0,0,.36))"></div>
<div class="vl" style="left:125.50px"></div>
<div class="vl" style="left:251.10px"></div>
<div class="vl" style="left:376.80px"></div>
<div class="vl" style="left:502.50px"></div>
</div>
<div class="red" style="left:216.100px;top:189px;width:204.600px;height:127px"></div>
<div class="badge" style="left:207.800px;top:304.100px;font-weight:700">1</div>
<div class="red" style="left:544px;top:189px;width:136.200px;height:81px"></div>
<div class="badge" style="left:536.100px;top:258.700px">2</div>
<svg style="left:329px;top:473px" width="8" height="12" viewBox="0 0 8 12"><path fill="#fff" stroke="#80828e" stroke-width=".9" d="M.5.700v8.800l2-1.800 1.300 3.100 1.400-.6-1.300-3h2.800z"/></svg>
</body>
</html>
